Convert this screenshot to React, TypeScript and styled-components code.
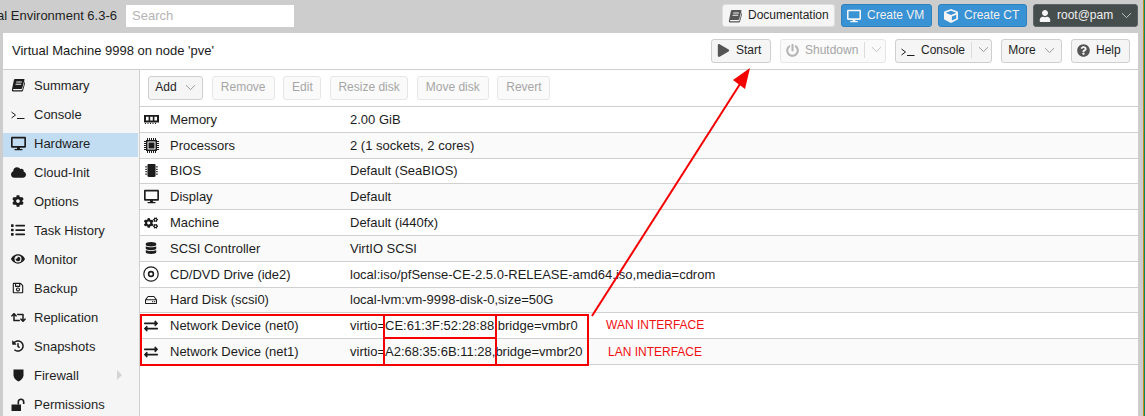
import React from 'react';
import styled, { createGlobalStyle } from 'styled-components';
import {
  FaCloud,
  FaCog,
  FaCogs,
  FaCube,
  FaDatabase,
  FaDesktop,
  FaExchangeAlt,
  FaEye,
  FaHistory,
  FaList,
  FaMicrochip,
  FaPlay,
  FaPowerOff,
  FaQuestionCircle,
  FaRegHdd,
  FaRegSave,
  FaRetweet,
  FaUser,
} from 'react-icons/fa';

const GlobalStyle = createGlobalStyle`
  html, body {
    margin: 0;
    padding: 0;
    height: 100%;
    overflow: hidden;
    background: #cdcdcd;
  }
  body {
    font-family: 'Liberation Sans', Arial, sans-serif;
    font-size: 13px;
    color: #1c1c1c;
  }
`;

const Screen = styled.div`
  position: relative;
  width: 1145px;
  height: 416px;
  display: flex;
  overflow: hidden;
`;

const Viewport = styled.div`
  width: 1143px;
  display: flex;
  flex-direction: column;
  background: #cdcdcd;
`;

const WindowEdge = styled.div`
  width: 2px;
  background: linear-gradient(to right, #c98a1c 50%, #0b8a5f 50%);
`;

const TopBar = styled.header`
  height: 33px;
  flex: none;
  display: flex;
  align-items: center;
  padding: 0 5px 2px 0;
  box-sizing: border-box;
`;

const ProductName = styled.div`
  width: 117px;
  display: flex;
  justify-content: flex-end;
  overflow: hidden;
  white-space: nowrap;
  color: #1f1f1f;
  font-size: 13px;
`;

const SearchBox = styled.input`
  width: 168px;
  height: 22px;
  margin-left: 9px;
  padding: 0 6px;
  box-sizing: border-box;
  border: 0;
  background: #fff;
  font: 13px 'Liberation Sans', Arial, sans-serif;
  &::placeholder {
    color: #b4b4b4;
  }
`;

const TopActions = styled.div`
  margin-left: auto;
  display: flex;
  align-items: center;
  gap: 6px;
`;

const TopButton = styled.div<{ $tone: 'light' | 'blue' | 'dark'; $width: number }>`
  width: ${(p) => p.$width}px;
  height: 23px;
  box-sizing: border-box;
  display: flex;
  align-items: center;
  gap: 6px;
  padding: 0 0 2px 5px;
  border-radius: 3px;
  border: 1px solid
    ${(p) => (p.$tone === 'blue' ? '#2f80bd' : p.$tone === 'dark' ? '#5d6464' : '#dedede')};
  background: ${(p) => (p.$tone === 'blue' ? '#3892d4' : p.$tone === 'dark' ? '#464d4d' : '#f5f5f5')};
  color: ${(p) => (p.$tone === 'light' ? '#1f1f1f' : '#f0f0f0')};
  font-size: 12px;
  white-space: nowrap;
  svg.lead {
    color: ${(p) => (p.$tone === 'light' ? '#555' : '#f5f5f5')};
    flex: none;
    margin-top: 2px;
  }
`;

const TopCaret = styled.span`
  display: flex;
  margin: 2px 0 0 2px;
`;

const Panel = styled.main`
  flex: 1;
  min-height: 0;
  width: 1135px;
  margin-left: 3px;
  display: flex;
  flex-direction: column;
  background: #fff;
`;

const PanelHeader = styled.div`
  height: 37px;
  flex: none;
  box-sizing: border-box;
  display: flex;
  align-items: center;
  padding: 0 8px 1px 9px;
  border-bottom: 1px solid #cfcfcf;
`;

const PanelTitle = styled.div`
  font-size: 13px;
  color: #1a1a1a;
  padding-bottom: 1px;
`;

const HeaderActions = styled.div`
  margin-left: auto;
  display: flex;
  align-items: center;
  gap: 9px;
`;

const ToolButton = styled.div<{ $off?: boolean; $lead?: boolean; $width: number }>`
  width: ${(p) => p.$width}px;
  height: 24px;
  flex: none;
  box-sizing: border-box;
  display: flex;
  align-items: center;
  justify-content: ${(p) => (p.$lead ? 'flex-start' : 'center')};
  gap: 6px;
  padding: 0 0 2px ${(p) => (p.$lead ? '5px' : '0')};
  border: 1px solid ${(p) => (p.$off ? '#e6e6e6' : '#cfcfcf')};
  border-radius: 3px;
  background: ${(p) => (p.$off ? '#fafafa' : '#f5f5f5')};
  color: ${(p) => (p.$off ? '#a6a6a6' : '#1f1f1f')};
  font-size: 12px;
  white-space: nowrap;
  svg.lead {
    color: ${(p) => (p.$off ? '#b4b4b4' : '#555')};
    flex: none;
    margin-top: 2px;
  }
`;

const CaretGap = styled.span`
  display: flex;
  margin: 2px 0 0 2px;
`;

const SplitRule = styled.span`
  width: 1px;
  height: 16px;
  background: #dcdcdc;
`;

const Body = styled.div`
  flex: 1;
  min-height: 0;
  display: flex;
`;

const SideNav = styled.nav`
  width: 137px;
  flex: none;
  box-sizing: border-box;
  padding-top: 5px;
  display: flex;
  flex-direction: column;
  gap: 5px;
  background: #f5f5f5;
  border-right: 1px solid #cfcfcf;
  overflow: hidden;
`;

const NavItem = styled.div<{ $active?: boolean }>`
  height: 24px;
  flex: none;
  margin-right: 1px;
  display: flex;
  align-items: center;
  padding-bottom: 4px;
  box-sizing: border-box;
  background: ${(p) => (p.$active ? '#c2ddf2' : 'transparent')};
  color: #1f1f1f;
  font-size: 13px;
`;

const NavIcon = styled.span`
  width: 31px;
  flex: none;
  display: flex;
  justify-content: center;
  padding-right: 1px;
  box-sizing: border-box;
  font-size: 14px;
  color: #1c1c1c;
`;

const NavCaret = styled.span`
  margin-left: auto;
  margin-right: 16px;
  width: 0;
  height: 0;
  border-left: 5px solid #d4d4d4;
  border-top: 5px solid transparent;
  border-bottom: 5px solid transparent;
`;

const Content = styled.section`
  flex: 1;
  min-width: 0;
  display: flex;
  flex-direction: column;
`;

const Toolbar = styled.div`
  height: 37px;
  flex: none;
  box-sizing: border-box;
  display: flex;
  align-items: center;
  gap: 8.7px;
  padding: 0 0 1px 8px;
  border-bottom: 1px solid #cfcfcf;
`;

const Row = styled.div<{ $shaded: boolean }>`
  height: 25.8px;
  flex: none;
  box-sizing: border-box;
  display: flex;
  align-items: center;
  border-bottom: 1px solid #d0d0d0;
  background: ${(p) => (p.$shaded ? '#fafafa' : '#fff')};
  color: #1c1c1c;
  font-size: 13px;
  white-space: nowrap;
`;

const RowIcon = styled.span`
  width: 30px;
  flex: none;
  display: flex;
  justify-content: center;
  padding-right: 8px;
  box-sizing: border-box;
  font-size: 14px;
  color: #1c1c1c;
`;

const RowName = styled.span`
  width: 180px;
  flex: none;
`;

const Annotations = styled.svg`
  position: absolute;
  left: 0;
  top: 0;
  width: 1145px;
  height: 416px;
  pointer-events: none;
`;

const Note = styled.span<{ $x: number; $y: number }>`
  position: absolute;
  left: ${(p) => p.$x}px;
  top: ${(p) => p.$y}px;
  color: #f01010;
  font-size: 12px;
  white-space: nowrap;
`;

const Chevron = ({ color = '#9a9a9a' }: { color?: string }) => (
  <svg width="11" height="7" viewBox="0 0 11 7" fill="none">
    <path d="M1 1.2 5.5 5.6 10 1.2" stroke={color} strokeWidth="1" />
  </svg>
);

const BookIcon = ({ size = 14 }: { size?: number }) => (
  <svg className="lead" width={size} height={size} viewBox="0 0 16 16" fill="currentColor">
    <path d="M4.6 1h10.2c.5 0 .8.4.6.9l-2.6 9.7c-.2.6-.6.9-1.2.9H3.2c-.6 0-1 .4-.9.8.1.4.5.7 1 .7h8.8c.4 0 .7-.3.9-.6l2.7-9.5.8.5-2.7 10c-.2.7-.8 1.1-1.5 1.1H2.9c-1.2 0-2.1-1-1.9-2.2L3.3 2.2C3.5 1.5 4 1 4.6 1Zm1.6 3-.3 1h6.4l.3-1H6.2Zm-.8 2.6-.3 1h6.4l.3-1H5.4Z" />
  </svg>
);

const PromptIcon = ({ size = 14 }: { size?: number }) => (
  <svg className="lead" width={size} height={size} viewBox="0 0 14 14" fill="none" stroke="#1c1c1c">
    <path d="M0.5 5 4.5 8 0.5 11" />
    <path d="M6 11.5H13.5" />
  </svg>
);

const ShieldIcon = () => (
  <svg width="11" height="14" viewBox="0 0 11 14" fill="#1c1c1c">
    <path d="M0.5 1.5h10v5.7c0 3-2.6 5.1-5 6.3-2.4-1.2-5-3.3-5-6.3Z" />
  </svg>
);

const UnlockIcon = () => (
  <svg width="15" height="13" viewBox="0 0 15 13" fill="#1c1c1c">
    <path d="M0.5 6.5h9.5V13H0.5Z" />
    <path d="M6.5 6.5V4a3.5 3.5 0 0 1 7 0v2h-1.6V4a1.9 1.9 0 0 0-3.8 0v2.5Z" />
  </svg>
);

const MemoryIcon = () => (
  <svg width="15" height="9" viewBox="0 0 15 9" fill="#1c1c1c">
    <path d="M0 0h15v7.5H0Zm2 1.8V5.6h2.6V1.8Zm4.2 0V5.6h2.6V1.8Zm4.2 0V5.6H13V1.8Z" fillRule="evenodd" />
    <path d="M1 8h1v1H1Zm2.5 0h1v1h-1Zm2.5 0h1v1H6Zm2.5 0h1v1h-1Zm2.5 0h1v1h-1Z" />
  </svg>
);

const ProcessorIcon = () => (
  <svg width="15" height="15" viewBox="0 0 15 15" fill="#1c1c1c">
    <path d="M2 2h11v11H2Zm1.5 1.5v8h8v-8Z" fillRule="evenodd" />
    <path d="M4.5 4.5h6v6h-6Z" />
    <path d="M3 0h1v2H3Zm2 0h1v2H5Zm2 0h1v2H7Zm2 0h1v2H9Zm2 0h1v2h-1ZM3 13h1v2H3Zm2 0h1v2H5Zm2 0h1v2H7Zm2 0h1v2H9Zm2 0h1v2h-1ZM0 3h2v1H0Zm0 2h2v1H0Zm0 2h2v1H0Zm0 2h2v1H0Zm0 2h2v1H0ZM13 3h2v1h-2Zm0 2h2v1h-2Zm0 2h2v1h-2Zm0 2h2v1h-2Zm0 2h2v1h-2Z" />
  </svg>
);

const DiscIcon = () => (
  <svg width="16" height="16" viewBox="0 0 16 16" fill="none" stroke="#1c1c1c">
    <circle cx="8" cy="8" r="7.2" strokeWidth="1.2" />
    <circle cx="8" cy="8" r="2.4" strokeWidth="1.6" />
  </svg>
);

const navItems: { label: string; icon: React.ReactNode; active?: boolean; caret?: boolean }[] = [
  { label: 'Summary', icon: <BookIcon /> },
  { label: 'Console', icon: <PromptIcon /> },
  { label: 'Hardware', icon: <FaDesktop size={15} />, active: true },
  { label: 'Cloud-Init', icon: <FaCloud size={15} /> },
  { label: 'Options', icon: <FaCog size={12} /> },
  { label: 'Task History', icon: <FaList size={14} /> },
  { label: 'Monitor', icon: <FaEye size={14} /> },
  { label: 'Backup', icon: <FaRegSave size={12} /> },
  { label: 'Replication', icon: <FaRetweet size={15} /> },
  { label: 'Snapshots', icon: <FaHistory size={12} /> },
  { label: 'Firewall', icon: <ShieldIcon />, caret: true },
  { label: 'Permissions', icon: <UnlockIcon /> },
];

const hardware: { name: string; value: string; icon: React.ReactNode }[] = [
  { name: 'Memory', value: '2.00 GiB', icon: <MemoryIcon /> },
  { name: 'Processors', value: '2 (1 sockets, 2 cores)', icon: <ProcessorIcon /> },
  { name: 'BIOS', value: 'Default (SeaBIOS)', icon: <FaMicrochip size={13} /> },
  { name: 'Display', value: 'Default', icon: <FaDesktop size={15} /> },
  { name: 'Machine', value: 'Default (i440fx)', icon: <FaCogs size={14} /> },
  { name: 'SCSI Controller', value: 'VirtIO SCSI', icon: <FaDatabase size={12} /> },
  {
    name: 'CD/DVD Drive (ide2)',
    value: 'local:iso/pfSense-CE-2.5.0-RELEASE-amd64.iso,media=cdrom',
    icon: <DiscIcon />,
  },
  { name: 'Hard Disk (scsi0)', value: 'local-lvm:vm-9998-disk-0,size=50G', icon: <FaRegHdd size={12} /> },
  { name: 'Network Device (net0)', value: 'virtio=CE:61:3F:52:28:88,bridge=vmbr0', icon: <FaExchangeAlt size={14} /> },
  { name: 'Network Device (net1)', value: 'virtio=A2:68:35:6B:11:28,bridge=vmbr20', icon: <FaExchangeAlt size={14} /> },
];

const App = () => (
  <Screen>
    <GlobalStyle />
    <Viewport>
      <TopBar>
        <ProductName>Proxmox Virtual Environment 6.3-6</ProductName>
        <SearchBox placeholder="Search" readOnly />
        <TopActions>
          <TopButton $tone="light" $width={113}>
            <BookIcon />
            Documentation
          </TopButton>
          <TopButton $tone="blue" $width={91}>
            <FaDesktop className="lead" size={14} />
            Create VM
          </TopButton>
          <TopButton $tone="blue" $width={89}>
            <FaCube className="lead" size={14} />
            Create CT
          </TopButton>
          <TopButton $tone="dark" $width={105}>
            <FaUser className="lead" size={12} />
            root@pam
            <TopCaret>
              <Chevron color="#c4c4c4" />
            </TopCaret>
          </TopButton>
        </TopActions>
      </TopBar>
      <Panel>
        <PanelHeader>
          <PanelTitle>Virtual Machine 9998 on node 'pve'</PanelTitle>
          <HeaderActions>
            <ToolButton $lead $width={60}>
              <FaPlay className="lead" size={13} />
              Start
            </ToolButton>
            <ToolButton $off $lead $width={106}>
              <FaPowerOff className="lead" size={13} />
              Shutdown
              <SplitRule />
              <Chevron color="#c4c4c4" />
            </ToolButton>
            <ToolButton $lead $width={97}>
              <PromptIcon />
              Console
              <SplitRule />
              <Chevron />
            </ToolButton>
            <ToolButton $width={61}>
              More
              <CaretGap>
                <Chevron />
              </CaretGap>
            </ToolButton>
            <ToolButton $lead $width={59}>
              <FaQuestionCircle className="lead" size={13} />
              Help
            </ToolButton>
          </HeaderActions>
        </PanelHeader>
        <Body>
          <SideNav>
            {navItems.map((item) => (
              <NavItem key={item.label} $active={item.active}>
                <NavIcon>{item.icon}</NavIcon>
                {item.label}
                {item.caret && <NavCaret />}
              </NavItem>
            ))}
          </SideNav>
          <Content>
            <Toolbar>
              <ToolButton $width={55}>
                Add
                <CaretGap>
                  <Chevron />
                </CaretGap>
              </ToolButton>
              <ToolButton $off $width={63}>Remove</ToolButton>
              <ToolButton $off $width={38}>Edit</ToolButton>
              <ToolButton $off $width={78}>Resize disk</ToolButton>
              <ToolButton $off $width={72}>Move disk</ToolButton>
              <ToolButton $off $width={53}>Revert</ToolButton>
            </Toolbar>
            {hardware.map((row, i) => (
              <Row key={row.name} $shaded={i % 2 === 1}>
                <RowIcon>{row.icon}</RowIcon>
                <RowName>{row.name}</RowName>
                {row.value}
              </Row>
            ))}
          </Content>
        </Body>
      </Panel>
    </Viewport>
    <WindowEdge />
    <Annotations viewBox="0 0 1145 416" fill="none">
      <g stroke="#f40000" strokeWidth="2">
        <rect x="141" y="315" width="447" height="50" />
        <path d="M384 315V365M496 315V365M384 338H496" />
        <path d="M592 316 740 84" />
      </g>
      <path d="M750 68 733 80 745 89Z" fill="#f40000" />
    </Annotations>
    <Note $x={606} $y={318}>WAN INTERFACE</Note>
    <Note $x={608} $y={345}>LAN INTERFACE</Note>
  </Screen>
);

export default App;
